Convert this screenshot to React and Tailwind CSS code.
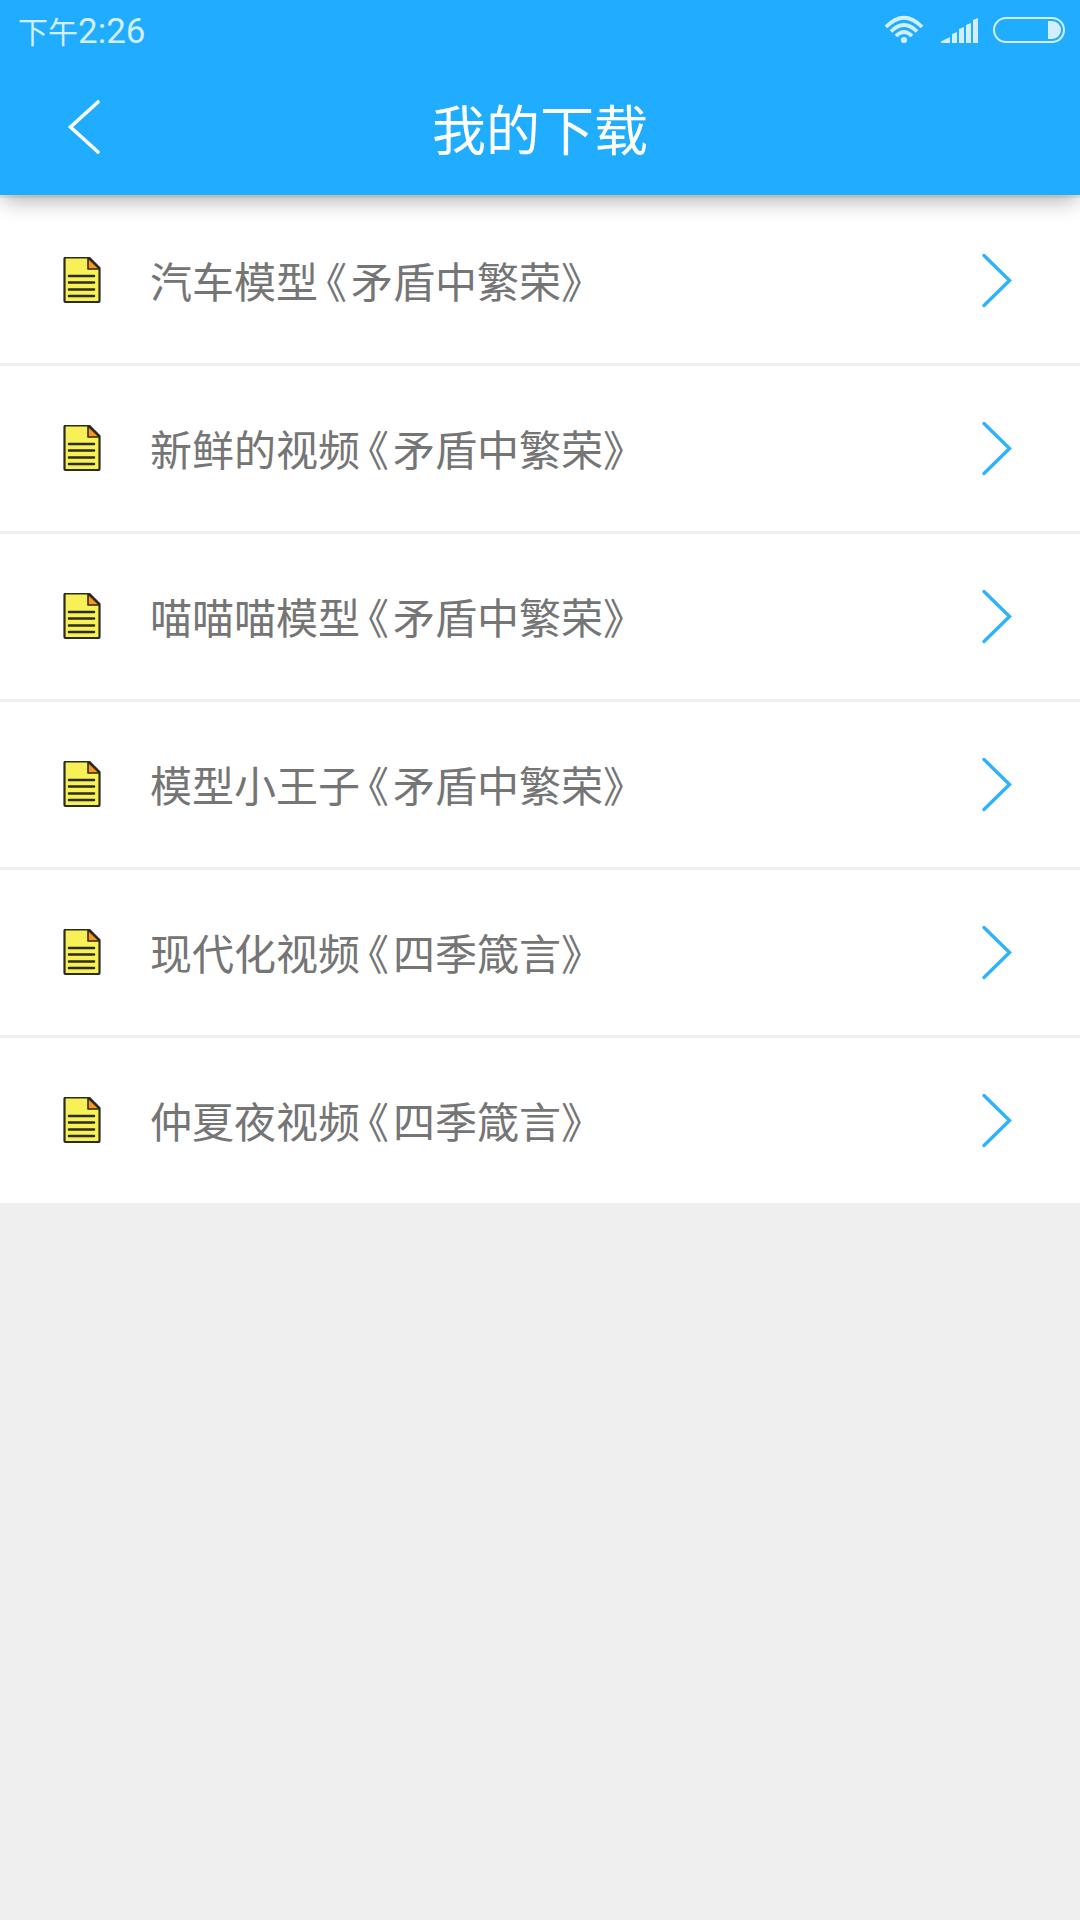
const downloads = [
  { id: 1, name: "汽车模型", book: "矛盾中繁荣" },
  { id: 2, name: "新鲜的视频", book: "矛盾中繁荣" },
  { id: 3, name: "喵喵喵模型", book: "矛盾中繁荣" },
  { id: 4, name: "模型小王子", book: "矛盾中繁荣" },
  { id: 5, name: "现代化视频", book: "四季箴言" },
  { id: 6, name: "仲夏夜视频", book: "四季箴言" },
];

function StatusBar() {
  return (
    <div className="flex h-[60px] items-center justify-between pl-[18px] pr-[15px] text-[#d2eeff]">
      <div className="flex items-center pt-[3px] leading-none">
        <span className="pb-1 text-[30px]">下午</span>
        <span className="font-['Roboto'] text-[35px] font-normal">2:26</span>
      </div>
      <svg width="181" height="30" viewBox="884 15 181 30" fill="none">
        {/* wifi */}
        <g stroke="currentColor" strokeWidth="3.8">
          <path d="M886 27Q904 8.500 922 27" />
          <path d="M891 31.500Q904 18.500 917 31.500" />
          <path d="M896 36Q904 28 912 36" />
        </g>
        <circle cx="904" cy="40" r="3.100" fill="currentColor" />
        {/* signal */}
        <g fill="currentColor">
          <path d="M941 43v-1.500L950 37v6z" />
          <path d="M952 43v-9l5-2v11z" />
          <path d="M959 43V29l5-2v16z" />
          <path d="M966 43V25l5-2v20z" />
          <path d="M973 43V20l5-2v25z" />
        </g>
        {/* battery */}
        <rect x="994" y="18" width="70" height="24" rx="12" stroke="currentColor" strokeWidth="2" />
        <path d="M1048 21h4a9 9 0 0 1 0 18h-4z" fill="currentColor" />
      </svg>
    </div>
  );
}

function Header() {
  return (
    <header className="relative z-10 h-[195px] bg-[#20adff] shadow-[0_9px_20px_-3px_rgba(0,0,0,0.3)]">
      <StatusBar />
      <div className="grid h-[133px] grid-cols-[170px_1fr_170px] items-center">
        <button className="pl-[66px]">
          <svg className="block" width="36" height="56" viewBox="66.5 99 36 56" fill="none">
            <path d="M98.500 102L71 127l27.500 25" stroke="#fff" strokeWidth="3.600" strokeLinecap="round" />
          </svg>
        </button>
        <h1 className="pt-0.5 text-center text-[54px] font-normal leading-[60px] text-white">我的下载</h1>
      </div>
    </header>
  );
}

function FileIcon() {
  return (
    <svg width="40" height="48" viewBox="62 257 40 48" fill="none" stroke="#2b2b1f" strokeLinejoin="round">
      <path d="M66 257.500h23l10.500 10.500v32.500q0 1.500-1.500 1.500H66q-1.500 0-1.500-1.500V259q0-1.500 1.500-1.500z" fill="#f7f155" strokeWidth="2.200" />
      <path d="M88 258v11h11.500z" fill="#ff9420" strokeWidth="1.600" />
      <path d="M69 276h25M69 282.500h25M69 289.500h25M69 296h25" strokeWidth="2.600" strokeLinecap="round" />
    </svg>
  );
}

function DownloadRow({ item }) {
  return (
    <li className="flex h-[168px] items-center border-t-[3px] border-[#efefef] bg-white pl-[62px] pr-[67px]">
      <FileIcon />
      <p className="ml-12 flex flex-1 pb-0.5 text-[42px] font-normal leading-[60px] text-[#757575]">
        <span>{item.name}</span>
        {/* half width brackets */}
        <span className="w-[33px] pl-[8px] [font-feature-settings:'halt']">《</span>
        <span>{item.book}</span>
        <span className="[font-feature-settings:'halt']">》</span>
      </p>
      <svg width="32" height="56" viewBox="981 253 32 56" fill="none">
        <path d="M984 255.500l25.500 25-25.500 25" stroke="#2db2ff" strokeWidth="3.400" strokeLinecap="round" />
      </svg>
    </li>
  );
}

function App() {
  return (
    <div className="min-h-screen w-full bg-[#efefef] font-['Noto_Sans_CJK_SC',sans-serif]">
      <Header />
      <ul>
        {downloads.map((item) => (
          <DownloadRow key={item.id} item={item} />
        ))}
      </ul>
    </div>
  );
}

export default App;
